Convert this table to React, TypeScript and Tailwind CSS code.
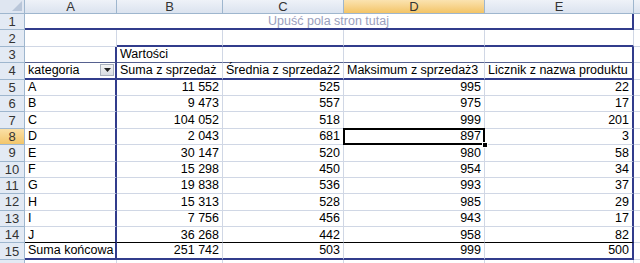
import React from "react";

type Row = [string, string, string, string, string];

const pivotRows: Row[] = [
  ["A", "11 552", "525", "995", "22"],
  ["B", "9 473", "557", "975", "17"],
  ["C", "104 052", "518", "999", "201"],
  ["D", "2 043", "681", "897", "3"],
  ["E", "30 147", "520", "980", "58"],
  ["F", "15 298", "450", "954", "34"],
  ["G", "19 838", "536", "993", "37"],
  ["H", "15 313", "528", "985", "29"],
  ["I", "7 756", "456", "943", "17"],
  ["J", "36 268", "442", "958", "82"],
];

const totalRow: Row = ["Suma końcowa", "251 742", "503", "999", "500"];

const columns = ["A", "B", "C", "D", "E", ""];

function ColHead({ label, active }: { label: string; active?: boolean }) {
  return (
    <div
      className={`flex items-center justify-center border-r border-b border-[#9eb6ce] text-[13px] text-[#333] ${
        active ? "bg-linear-to-b from-[#fbe3b0] to-[#f3c465]" : "bg-linear-to-b from-[#eef2f8] to-[#dbe3ef]"
      }`}
    >
      {label}
    </div>
  );
}

function RowHead({ n, active, top }: { n: number; active?: boolean; top?: boolean }) {
  return (
    <div
      className={`flex justify-center border-r border-b border-[#9eb6ce] text-[13px] text-[#333] ${
        top ? "items-start pt-[1px]" : "items-center"
      } ${active ? "bg-linear-to-b from-[#fae0a6] to-[#f3c66a]" : "bg-[#e3eaf4]"}`}
    >
      {n}
    </div>
  );
}

// Border rules for the pivot outline drawn on cells A2:E16
function cellClass(r: number, c: number) {
  const cls = [
    "relative flex items-center bg-white border-r border-b border-[#d0d7e5] px-[3px] whitespace-nowrap overflow-visible text-[12.5px] text-black",
  ];
  const inPivot = c <= 4;
  if ((c === 0 || c === 4) && r >= 3 && r <= 15) cls.push("border-r-2 border-r-[#313c8c]");
  if (r === 2 && c >= 1 && c <= 4) cls.push("border-b-2 border-b-[#313c8c]");
  if (r === 3 && inPivot) cls.push("border-b-[#56618f]");
  if (r === 4 && inPivot) cls.push("border-b-2 border-b-[#313c8c]");
  if (r === 14 && inPivot) cls.push("border-b-black");
  if (r === 15 && inPivot) cls.push("border-b-2 border-b-[#313c8c]");
  return cls.join(" ");
}

function Cell({ r, c, children, right }: { r: number; c: number; children?: React.ReactNode; right?: boolean }) {
  return <div className={`${cellClass(r, c)} ${right ? "justify-end" : "justify-start"}`}>{children}</div>;
}

function FilterButton() {
  return (
    <div className="flex h-[12px] w-[14px] items-center justify-center border border-[#a9b1bd] bg-linear-to-b from-[#f4f4f4] to-[#d9dde3]">
      <svg width="7" height="4" viewBox="0 0 7 4">
        <path d="M0 0 H7 L3.5 4 Z" fill="#222" />
      </svg>
    </div>
  );
}

function Corner() {
  return (
    <div className="flex items-end justify-end border-r border-b border-[#9eb6ce] bg-[#dfe6f1] p-[2px]">
      <svg width="10" height="10" viewBox="0 0 10 10">
        <path d="M10 0 V10 H0 Z" fill="#b9c6d9" />
      </svg>
    </div>
  );
}

export default function App() {
  return (
    <div className="h-[263px] w-[640px] overflow-hidden bg-white font-['Liberation_Sans',Arial,sans-serif] leading-none">
      <div className="grid h-full grid-cols-[25px_92px_106px_121px_141px_149px_1fr] grid-rows-[14px_repeat(15,16.4px)_1fr]">
        {/* header row */}
        <Corner />
        {columns.map((l, i) => (
          <ColHead key={i} label={l} active={l === "D"} />
        ))}

        {/* row 1: page field drop zone */}
        <RowHead n={1} />
        <div className="col-span-5 flex items-center justify-center border-r-2 border-b-2 border-[#313c8c] bg-white text-[12.5px] text-[#9aa0bd]">
          Upuść pola stron tutaj
        </div>
        <Cell r={1} c={5} />

        {/* row 2 */}
        <RowHead n={2} />
        {[0, 1, 2, 3, 4, 5].map((c) => (
          <Cell key={c} r={2} c={c} />
        ))}

        {/* row 3 */}
        <RowHead n={3} />
        <Cell r={3} c={0} />
        <Cell r={3} c={1}>Wartości</Cell>
        <Cell r={3} c={2} />
        <Cell r={3} c={3} />
        <Cell r={3} c={4} />
        <Cell r={3} c={5} />

        {/* row 4: field headers */}
        <RowHead n={4} />
        <div className={`${cellClass(4, 0)} justify-between pr-[1px]`}>
          <span>kategoria</span>
          <FilterButton />
        </div>
        <Cell r={4} c={1}>Suma z sprzedaż</Cell>
        <Cell r={4} c={2}>Średnia z sprzedaż2</Cell>
        <Cell r={4} c={3}>Maksimum z sprzedaż3</Cell>
        <Cell r={4} c={4}>Licznik z nazwa produktu</Cell>
        <Cell r={4} c={5} />

        {/* rows 5-14: items */}
        {pivotRows.map((row, i) => {
          const r = i + 5;
          const selected = r === 8;
          return (
            <React.Fragment key={r}>
              <RowHead n={r} active={selected} />
              <Cell r={r} c={0}>{row[0]}</Cell>
              <Cell r={r} c={1} right>{row[1]}</Cell>
              <Cell r={r} c={2} right>{row[2]}</Cell>
              <div className={`${cellClass(r, 3)} justify-end`}>
                {row[3]}
                {selected && (
                  <>
                    <div className="pointer-events-none absolute top-[-1px] left-[-1px] right-[-1px] bottom-[-1px] z-10 border-2 border-black" />
                    <div className="absolute right-[-4px] bottom-[-4px] z-20 h-[6px] w-[6px] border border-white bg-black" />
                  </>
                )}
              </div>
              <Cell r={r} c={4} right>{row[4]}</Cell>
              <Cell r={r} c={5} />
            </React.Fragment>
          );
        })}

        {/* row 15: grand total */}
        <RowHead n={15} />
        <Cell r={15} c={0}>{totalRow[0]}</Cell>
        <Cell r={15} c={1} right>{totalRow[1]}</Cell>
        <Cell r={15} c={2} right>{totalRow[2]}</Cell>
        <Cell r={15} c={3} right>{totalRow[3]}</Cell>
        <Cell r={15} c={4} right>{totalRow[4]}</Cell>
        <Cell r={15} c={5} />

        {/* row 16 (partly visible) */}
        <RowHead n={16} top />
        {[0, 1, 2, 3, 4, 5].map((c) => (
          <Cell key={c} r={16} c={c} />
        ))}
      </div>
    </div>
  );
}
